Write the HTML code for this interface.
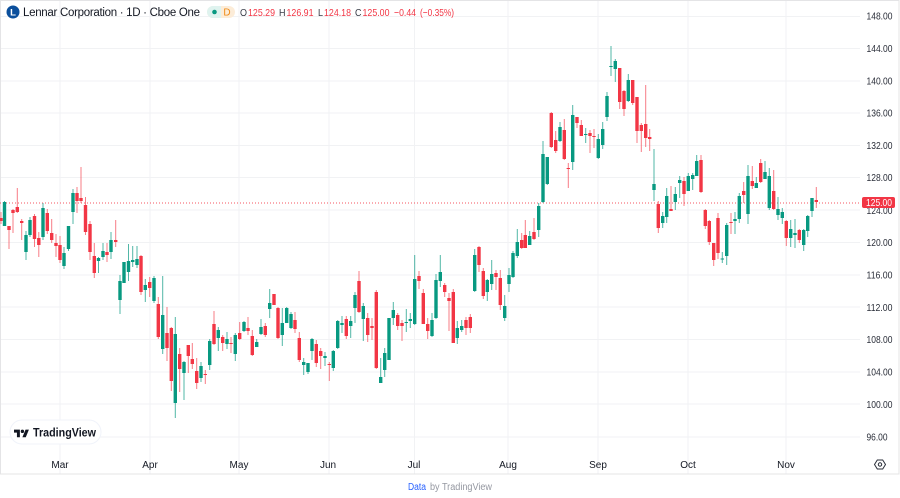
<!DOCTYPE html>
<html><head><meta charset="utf-8"><style>
html,body{margin:0;padding:0;background:#fff;width:900px;height:498px;overflow:hidden}
svg{position:absolute;left:0;top:0;filter:blur(.3px)}
text{font-family:"Liberation Sans",sans-serif}
.p{font-size:10.5px;fill:#2a2e39}
.t{font-size:10px;fill:#131722;text-anchor:middle}
.l{font-size:10.5px;fill:#f23645}
.g{font-size:10.5px;fill:#363a45}
</style></head><body>
<svg width="900" height="498" viewBox="0 0 900 498" xmlns="http://www.w3.org/2000/svg">
<rect width="900" height="498" fill="#fff"/>
<path d="M60 1V474M150 1V474M239 1V474M329 1V474M414.5 1V474M508 1V474M598 1V474M688 1V474M786 1V474M1 16.500H860M1 48.500H860M1 81H860M1 113H860M1 145.500H860M1 177.500H860M1 210H860M1 242.500H860M1 275H860M1 307H860M1 339.500H860M1 372H860M1 404H860M1 437H860" stroke="#f1f2f4" stroke-width="1" fill="none"/>
<rect x=".5" y=".5" width="898.500" height="473.500" fill="none" stroke="#e4e4e6"/>
<path d="M0 203H861" stroke="#f23645" stroke-width="1" stroke-dasharray="1 2" fill="none" opacity=".85"/>
<g fill="none">
<path stroke="#089981" stroke-opacity=".7" stroke-width="1" d="M4.500 201V226M26 231V260M30 217V237M43 203V240M64 247V269M68.500 226V251M73 189V224M98.500 257V273M103 243V260M111 232V259M120 275V314M124 262V283M128.500 244V281M132.700 246V267M137 246V268M145.300 279V302M154 276V303M162.700 276V354M175.300 317V418M184 361V400M201 362V382M209.700 339V370M218.300 327V351M227 332V349M235.300 333V361M244 321V332M256.700 339V347M261 319V335M269.700 289V318M282.300 308V346M286.700 307V323M291 312V329M303.700 358V375M308 363V374M312 338V360M325 352V366M333.300 350V371M337.700 320V349M342 316V333M350.700 316V338M355 292V323M363.300 303V341M380.700 358V383M384.700 348V377M389 318V360M393.300 302V325M406.300 309V332M410.300 313V328M414.700 255V325M432 313V337M436 274V319M440.300 255V287M457.300 321V344M461.700 320V332M474.700 249V292M487.300 279V301M491.700 260V290M504.700 295V321M509 268V292M513 251V278M517.300 229V258M529.700 231V245M538.700 203V237M543 141V203M547.300 157V185M560 122V142M572.700 105V170M585.700 128V143M598.300 134V159M602.700 122V149M607 92V121M611 46V76M615.300 59V82M628.300 74V102M654 149V201M662.700 212V228M666.700 188V223M675.300 187V210M679.700 176V198M688.300 173V191M692.700 173V190M696.700 155V176M722.300 252V263M726.700 223V265M735 212V234M739.300 193V223M748 165V224M756.300 177V188M765 161V179M769.300 168V210M778 197V220M782.300 208V224M790.700 220V247M795 219V248M803.700 229V251M807.700 215V237M812 198V217"/>
<path stroke="#f23645" stroke-opacity=".65" stroke-width="1" d="M1 212V224M9 226V249M13 209V233M17.300 188V213M21.700 219V240M34.500 214V247M38.800 232V257M47.300 209V234M51.700 219V243M56 234V257M60 236V263M77 187V213M81 167V203M85.500 197V235M90 221V260M94.300 243V278M107 243V262M115.700 220V247M141 255V295M149.700 277V297M158.300 297V339M167 307V361M171.300 327V391M179.700 348V392M188.300 345V373M192.300 343V369M196.700 358V389M205.300 370V384M214 311V345M222.700 335V351M231 337V353M239.700 322V340M248 317V335M252.300 330V356M265.300 323V337M274 294V305M278 307V339M295 312V333M299.300 332V362M316.300 340V367M320.700 348V369M329.300 362V381M346.300 316V339M359 271V313M367.700 313V342M372 318V340M376.300 290V369M397.700 313V330M402 320V341M419 271V289M423.300 289V324M427.700 318V339M444.700 283V297M449 293V331M453.300 289V343M466 317V335M470.300 314V333M479 246V272M483.300 268V299M496 270V290M500.300 270V310M521.700 233V249M525.300 220V248M534 218V240M551.300 112V148M555.700 131V153M564.300 119V160M568.300 163V188M577 117V128M581.300 120V136M590 130V153M594 129V148M619.700 68V109M624 90V116M632.700 80V105M637 97V143M641.300 123V152M645.700 85V147M649.700 129V151M658.300 201V233M671 186V211M684 177V206M701 155V193M705.300 209V229M709.300 220V245M713.700 243V266M718 213V259M731 213V234M743.700 182V203M752.300 166V189M760.700 159V183M773.700 170V210M786.300 220V246M799.300 229V243M816.300 187V208"/>
<path stroke="#089981" stroke-width="3.400" d="M4.500 202V226M26 235V252M30 220V235M43 208V237M64 253V266M68.500 226V249M73 193V212M98.500 258V261M103 251V257M111 240V252M120 281V300M124 262V283M128.500 261V272M132.700 260V262M137 259V265M145.300 285V290M154 278V301M162.700 315V349M175.300 334V403M184 362V373M201 366V378M209.700 341V365M218.300 330V338M227 339V344M235.300 335V354M244 322V331M256.700 342V347M261 327V334M269.700 303V309M282.300 323V335M286.700 308V323M291 314V328M303.700 362V365M308 363V372M312 339V351M325 356V358M333.300 351V368M337.700 321V348M342 323V325M350.700 321V326M355 295V308M363.300 306V319M380.700 377V383M384.700 353V370M389 318V360M393.300 310V318M406.300 322V323M410.300 319V321M414.700 279V324M432 320V336M436 280V318M440.300 272V281M457.300 328V338M461.700 326V330M474.700 255V291M487.300 280V292M491.700 274V284M504.700 306V318M509 275V284M513 253V277M517.300 242V256M529.700 236V245M538.700 206V230M543 154V202M547.300 157V184M560 127V141M572.700 115V162M585.700 134V135M598.300 139V158M602.700 129V145M607 96V117M611 66V67M615.300 61V69M628.300 80V101M654 184V190M662.700 216V223M666.700 196V217M675.300 194V202M679.700 180V183M688.300 176V191M692.700 175V179M696.700 161V176M722.300 258.500V259.500M726.700 225V256M735 219V221M739.300 196V219M748 176V214M756.300 183V188M765 172V179M769.300 176V208M778 209V215M782.300 212V218M790.700 229V238M795 233V235M803.700 230V245M807.700 216V231M812 198V211"/>
<path stroke="#f23645" stroke-width="3.400" d="M1 218V221M9 226V230M13 210V213M17.300 207V212M21.700 221V223M34.500 216V239M38.800 238V245M47.300 213V231M51.700 233V240M56 243V246M60 245V260M77 193V201M81 198V201M85.500 205V232M90 224V252M94.300 256V273M107 252V255M115.700 240V242M141 256V292M149.700 282V288M158.300 304V337M167 333V348M171.300 328V381M179.700 354V369M188.300 345V356M192.300 359V364M196.700 371V383M205.300 374V375M214 324V344M222.700 337V343M231 343V344M239.700 333V339M248 328V331M252.300 336V355M265.300 326V335M274 294V305M278 308V338M295 320V329M299.300 338V360M316.300 344V363M320.700 351V356M329.300 364V365M346.300 319V336M359 281V312M367.700 318V335M372 326V328M376.300 292V368M397.700 315V326M402 323V326M419 276V281M423.300 293V324M427.700 324V331M444.700 285V292M449 298V301M453.300 292V343M466 320V328M470.300 317V328M479 247V265M483.300 271V296M496 273V277M500.300 278V305M521.700 240V248M525.300 235V248M534 232V239M551.300 113V147M555.700 140V151M564.300 130V159M568.300 168V169M577 117V123M581.300 125V136M590 133V136M594 136V137M619.700 68V102M624 91V109M632.700 80V103M637 97V131M641.300 125V131M645.700 124V138M649.700 137V139M658.300 204V228M671 209V211M684 181V194M701 160V192M705.300 210V226M709.300 221V242M713.700 243V260M718 218V253M731 222V223M743.700 191V195M752.300 181V186M760.700 163V182M773.700 191V209M786.300 221V238M799.300 230V240M816.300 200V202"/>
</g>
<rect x="10" y="420" width="91" height="24" rx="12" fill="#fff" stroke="#f0f3fa"/>
<g transform="translate(14,428) scale(.42)" fill="#131722"><path d="M14 22H7V11H0V4h14v18zM28 22h-8l7.500-18h8L28 22z"/><circle cx="20" cy="8" r="4"/></g>
<text x="33" y="436.500" font-size="12" font-weight="700" fill="#131722" textLength="63" lengthAdjust="spacingAndGlyphs">TradingView</text>
<circle cx="13" cy="12" r="6.500" fill="#0b4f9c"/>
<text x="13" y="15.500" font-size="9.500" font-weight="700" fill="#fff" text-anchor="middle">L</text>
<text x="23" y="16" font-size="11.500" fill="#131722" textLength="177" lengthAdjust="spacing">Lennar Corporation · 1D · Cboe One</text>
<rect x="207" y="6" width="28" height="12" rx="6" fill="#fcecd8"/>
<path d="M213 6h8v12h-8a6 6 0 0 1 0-12z" fill="#dff3ef"/>
<circle cx="214.500" cy="12" r="2.300" fill="#089981"/>
<text x="227" y="15.700" font-size="10" fill="#ef8a15" text-anchor="middle">D</text>
<text class="g" x="240" y="16" textLength="7" lengthAdjust="spacingAndGlyphs">O</text><text class="l" x="248" y="16" textLength="27" lengthAdjust="spacingAndGlyphs">125.29</text>
<text class="g" x="279" y="16" textLength="6.500" lengthAdjust="spacingAndGlyphs">H</text><text class="l" x="286.500" y="16" textLength="27" lengthAdjust="spacingAndGlyphs">126.91</text>
<text class="g" x="318" y="16" textLength="5" lengthAdjust="spacingAndGlyphs">L</text><text class="l" x="324" y="16" textLength="27" lengthAdjust="spacingAndGlyphs">124.18</text>
<text class="g" x="355" y="16" textLength="6.500" lengthAdjust="spacingAndGlyphs">C</text><text class="l" x="362.500" y="16" textLength="27" lengthAdjust="spacingAndGlyphs">125.00</text>
<text class="l" x="394" y="16" textLength="22" lengthAdjust="spacingAndGlyphs">−0.44</text><text class="l" x="420" y="16" textLength="34" lengthAdjust="spacingAndGlyphs">(−0.35%)</text>
<g text-anchor="start">
<text class="p" x="866.500" y="19.500" textLength="26" lengthAdjust="spacingAndGlyphs">148.00</text><text class="p" x="866.500" y="52" textLength="26" lengthAdjust="spacingAndGlyphs">144.00</text><text class="p" x="866.500" y="84.500" textLength="26" lengthAdjust="spacingAndGlyphs">140.00</text><text class="p" x="866.500" y="116.500" textLength="26" lengthAdjust="spacingAndGlyphs">136.00</text><text class="p" x="866.500" y="149" textLength="26" lengthAdjust="spacingAndGlyphs">132.00</text><text class="p" x="866.500" y="181" textLength="26" lengthAdjust="spacingAndGlyphs">128.00</text><text class="p" x="866.500" y="214" textLength="26" lengthAdjust="spacingAndGlyphs">124.00</text><text class="p" x="866.500" y="246" textLength="26" lengthAdjust="spacingAndGlyphs">120.00</text><text class="p" x="866.500" y="278.500" textLength="26" lengthAdjust="spacingAndGlyphs">116.00</text><text class="p" x="866.500" y="311" textLength="26" lengthAdjust="spacingAndGlyphs">112.00</text><text class="p" x="866.500" y="343" textLength="26" lengthAdjust="spacingAndGlyphs">108.00</text><text class="p" x="866.500" y="375.500" textLength="26" lengthAdjust="spacingAndGlyphs">104.00</text><text class="p" x="866.500" y="408" textLength="26" lengthAdjust="spacingAndGlyphs">100.00</text><text class="p" x="866.500" y="440.500" textLength="21" lengthAdjust="spacingAndGlyphs">96.00</text>
</g>
<rect x="862" y="197" width="33" height="11" rx="2" fill="#f23645"/>
<text x="866" y="206" font-size="10.500" fill="#fff" textLength="26" lengthAdjust="spacingAndGlyphs">125.00</text>
<text class="t" x="60" y="468">Mar</text><text class="t" x="150" y="468">Apr</text><text class="t" x="239" y="468">May</text><text class="t" x="328" y="468">Jun</text><text class="t" x="414" y="468">Jul</text><text class="t" x="508" y="468">Aug</text><text class="t" x="598" y="468">Sep</text><text class="t" x="688" y="468">Oct</text><text class="t" x="786" y="468">Nov</text>
<g fill="none" stroke="#2a2e39" stroke-width="1"><path d="M877.300 460h5.400l2.800 4.500-2.800 4.500h-5.400l-2.800-4.500z"/><circle cx="880" cy="464.500" r="1.700"/></g>
<text x="408" y="490" font-size="10" fill="#2962ff" textLength="18" lengthAdjust="spacingAndGlyphs">Data</text>
<text x="430" y="490" font-size="10" fill="#9598a1" textLength="62" lengthAdjust="spacingAndGlyphs">by TradingView</text>
</svg>
</body></html>
